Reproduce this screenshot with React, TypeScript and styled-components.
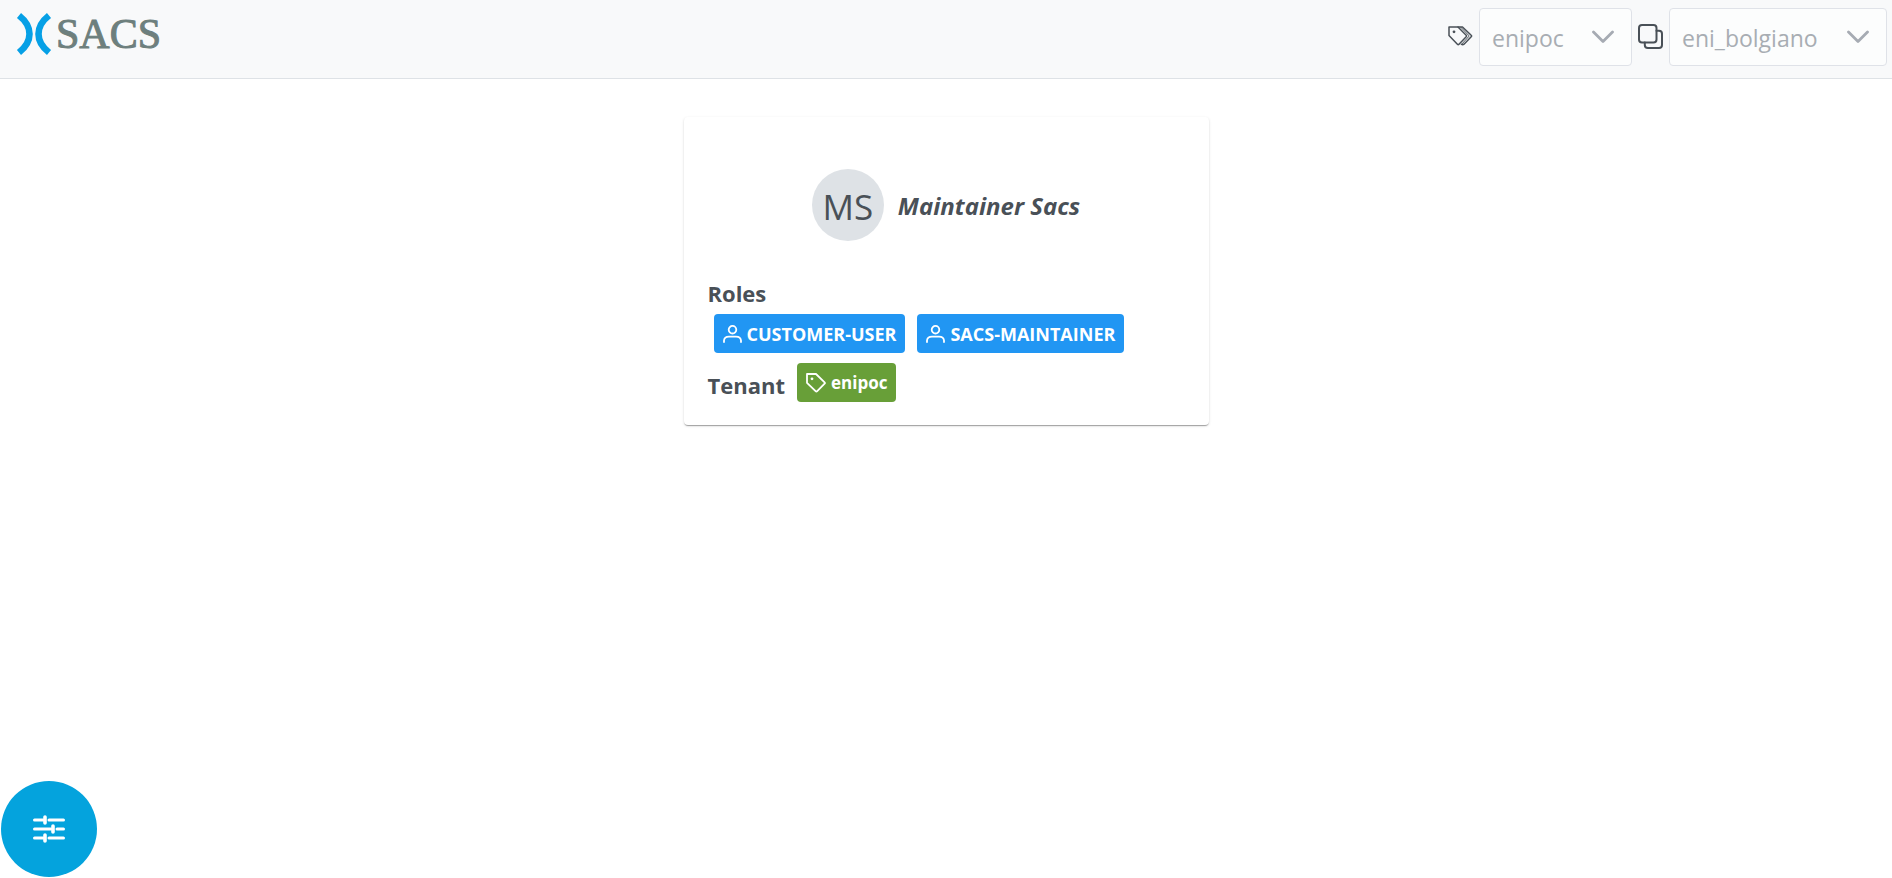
import React from 'react';
import styled, { createGlobalStyle } from 'styled-components';

const GlobalStyle = createGlobalStyle`
  * { box-sizing: border-box; }
  body {
    margin: 0;
    background: #ffffff;
    color: #495057;
    font-family: "Segoe UI", "Open Sans", "Noto Sans", sans-serif;
    font-size: 23px;
    line-height: 32px;
  }
`;

const Header = styled.header`
  display: flex;
  justify-content: space-between;
  align-items: flex-start;
  padding: 8px 5px 12px 16px;
  background: #f8f9fa;
  border-bottom: 1px solid #dee2e6;
`;

const Brand = styled.a`
  display: flex;
  align-items: center;
  gap: 4px;
  padding-top: 4px;
  color: #6d7f7d;
  font-family: "Liberation Serif", serif;
  font-size: 42px;
  line-height: 44px;
  text-decoration: none;
  -webkit-text-stroke: 1px #6d7f7d;
`;

const Controls = styled.div`
  display: flex;
  align-items: center;
  gap: 6px;
`;

const Field = styled.label`
  display: flex;
  align-items: center;
  gap: 6px;

  > svg { margin-bottom: 2px; }
`;

const SelectBox = styled.span`
  display: grid;
  align-items: center;

  > * { grid-area: 1 / 1; }

  svg {
    justify-self: end;
    margin-right: 18px;
    pointer-events: none;
  }
`;

const Select = styled.select<{ $width: number }>`
  appearance: none;
  width: ${({ $width }) => $width}px;
  height: 58px;
  padding: 2px 12px 0;
  background: #fcfdfd;
  border: 1px solid #dfe2e8;
  border-radius: 4px;
  color: #a8adb3;
  font: inherit;
  opacity: 1;
`;

const Main = styled.main`
  display: flex;
  justify-content: center;
  padding: 38px 16px;
`;

const Card = styled.section`
  width: 525px;
  padding: 52px 24px 23px;
  border-radius: 4px;
  background: #ffffff;
  box-shadow: 0 2px 1px -1px rgba(0, 0, 0, 0.2), 0 1px 1px rgba(0, 0, 0, 0.14),
    0 1px 3px rgba(0, 0, 0, 0.12);
`;

const Profile = styled.div`
  display: flex;
  justify-content: center;
  align-items: center;
  gap: 14px;
  margin-bottom: 36px;
`;

const Avatar = styled.span`
  display: flex;
  justify-content: center;
  align-items: center;
  width: 72px;
  height: 72px;
  padding-top: 4px;
  border-radius: 50%;
  background: #dee2e6;
  font-size: 35px;
`;

const Name = styled.h1`
  margin: 0;
  padding-top: 2px;
  font-size: 24px;
  font-style: italic;
  font-weight: 700;
`;

const Label = styled.h2`
  margin: 0;
  font-size: 22px;
  font-weight: 700;
`;

const TagRow = styled.div`
  display: flex;
  gap: 12px;
  padding: 5px 6px 10px;
`;

const TenantRow = styled.div`
  display: flex;
  align-items: center;
  gap: 12px;

  h2 { padding-top: 4px; }
`;

const Tag = styled.span<{ $color: string; $size: number }>`
  display: inline-flex;
  align-items: center;
  gap: 5px;
  height: 39px;
  padding: 0 9px;
  border-radius: 4px;
  background: ${({ $color }) => $color};
  color: #ffffff;
  font-size: ${({ $size }) => $size}px;
  font-weight: 700;
  line-height: 24px;
  white-space: nowrap;
`;

const SettingsButton = styled.button`
  position: fixed;
  left: 1px;
  bottom: 1px;
  display: flex;
  justify-content: center;
  align-items: center;
  width: 96px;
  height: 96px;
  padding: 0;
  border: 0;
  border-radius: 50%;
  background: #04a3dd;
  color: #ffffff;
  cursor: pointer;
`;

const LogoMark = () => (
  <svg width="36" height="44" viewBox="0 0 36 44" fill="none" stroke="#06a0e6" strokeWidth="6.6" aria-hidden="true">
    <path d="M3 3.5C17 14.5 17 29.5 3 40.5" />
    <path d="M33 3.5C19 14.5 19 29.5 33 40.5" />
  </svg>
);

const Chevron = () => (
  <svg width="22" height="14" viewBox="0 0 22 14" fill="none" stroke="#a6abb3" strokeWidth="2.8" strokeLinecap="round" strokeLinejoin="round" aria-hidden="true">
    <path d="M1.5 2 11 11.5 20.5 2" />
  </svg>
);

const TagsIcon = () => (
  <svg width="25" height="20" viewBox="0 0 25 20" fill="none" stroke="#495057" strokeWidth="1.5" strokeLinejoin="round" strokeLinecap="round" aria-hidden="true">
    <path d="M1 1H10L18.200 9.300Q18.900 10 18.200 10.700L11 18.200Q10.200 19 9.400 18.200L1 9.500Z" />
    <path d="M10 1H14.500L23.200 9.300Q24 10 23.200 10.800L16 18.200Q14.800 19.200 13.500 18.400" />
    <path d="M12.800 1.200 20.600 9.300Q21.200 10 20.600 10.700L13.500 18.400" strokeWidth="1" />
    <circle cx="6" cy="5.800" r="1.400" fill="#495057" stroke="none" />
  </svg>
);

const CloneIcon = () => (
  <svg width="25" height="25" viewBox="0 0 25 25" fill="none" stroke="#495057" strokeWidth="2" strokeLinecap="round" aria-hidden="true">
    <rect x="1" y="1" width="17.500" height="17.500" rx="3" />
    <path d="M18.500 6.800H21Q24 6.800 24 9.800V21Q24 24 21 24H9.800Q6.800 24 6.800 21V18.500" />
  </svg>
);

const UserIcon = () => (
  <svg width="19" height="18" viewBox="0 0 19 18" fill="none" stroke="currentColor" strokeWidth="1.8" strokeLinecap="round" aria-hidden="true">
    <circle cx="9.500" cy="4.700" r="3.800" />
    <path d="M1 17V15.500Q1.300 11.600 6 11.600H13Q17.700 11.600 18 15.500V17" />
  </svg>
);

const TagIcon = () => (
  <svg width="20" height="20" viewBox="0 0 20 20" fill="none" stroke="currentColor" strokeWidth="1.8" strokeLinejoin="round" aria-hidden="true">
    <path d="M1 1H10L18.600 9.300Q19.300 10 18.600 10.700L11.200 18.200Q10.400 19 9.600 18.200L1 9.800Z" />
    <circle cx="6" cy="5.800" r="1.400" fill="currentColor" stroke="none" />
  </svg>
);

const SlidersIcon = () => (
  <svg width="32" height="28" viewBox="0 0 32 28" fill="none" stroke="currentColor" strokeWidth="3" strokeLinecap="round" aria-hidden="true">
    <path d="M1.500 5H10M16 5H30.500M1.500 14H18M24 14H30.500M1.500 23H10M16 23H30.500" />
    <path d="M12 2V8M20 11V17M12 20V26" strokeWidth="3.600" />
  </svg>
);

const roles = ['CUSTOMER-USER', 'SACS-MAINTAINER'];

export default function App() {
  return (
    <>
      <GlobalStyle />
      <Header>
        <Brand href="#">
          <LogoMark />
          <span>SACS</span>
        </Brand>
        <Controls>
          <Field>
            <TagsIcon />
            <SelectBox>
              <Select $width={153} disabled aria-label="Tenant">
                <option>enipoc</option>
              </Select>
              <Chevron />
            </SelectBox>
          </Field>
          <Field>
            <CloneIcon />
            <SelectBox>
              <Select $width={218} disabled aria-label="Site">
                <option>eni_bolgiano</option>
              </Select>
              <Chevron />
            </SelectBox>
          </Field>
        </Controls>
      </Header>
      <Main>
        <Card>
          <Profile>
            <Avatar>MS</Avatar>
            <Name>Maintainer Sacs</Name>
          </Profile>
          <Label>Roles</Label>
          <TagRow>
            {roles.map((role) => (
              <Tag key={role} $color="#2196f3" $size={18}>
                <UserIcon />
                {role}
              </Tag>
            ))}
          </TagRow>
          <TenantRow>
            <Label>Tenant</Label>
            <Tag $color="#689f38" $size={17}>
              <TagIcon />
              enipoc
            </Tag>
          </TenantRow>
        </Card>
      </Main>
      <SettingsButton type="button" aria-label="Settings">
        <SlidersIcon />
      </SettingsButton>
    </>
  );
}
